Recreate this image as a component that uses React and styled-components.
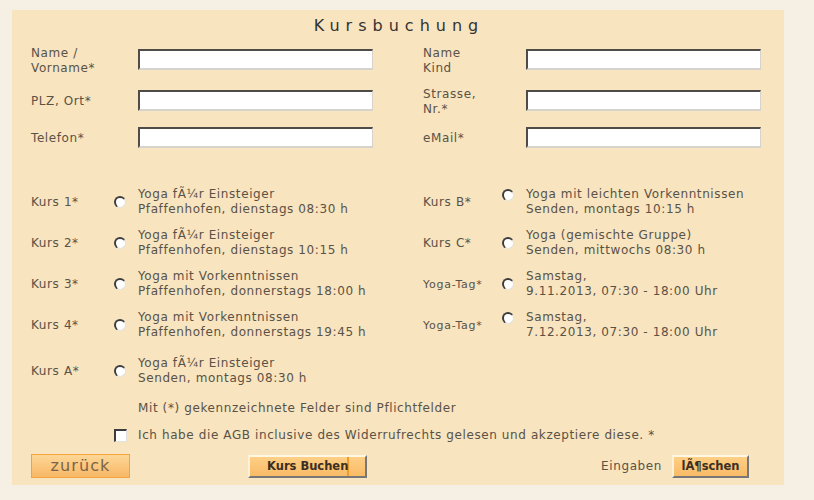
import styled, { createGlobalStyle } from "styled-components";

const GlobalStyle = createGlobalStyle`
  html, body {
    margin: 0;
    padding: 0;
    background: #f6efe4;
  }
  body {
    font-family: "DejaVu Sans", Verdana, sans-serif;
    font-size: 12px;
    letter-spacing: 0.6px;
    color: #5a5246;
  }
`;

const leftCourses = [
  { label: "Kurs 1*", lines: ["Yoga fÃ¼r Einsteiger", "Pfaffenhofen, dienstags 08:30 h"] },
  { label: "Kurs 2*", lines: ["Yoga fÃ¼r Einsteiger", "Pfaffenhofen, dienstags 10:15 h"] },
  { label: "Kurs 3*", lines: ["Yoga mit Vorkenntnissen", "Pfaffenhofen, donnerstags 18:00 h"] },
  { label: "Kurs 4*", lines: ["Yoga mit Vorkenntnissen", "Pfaffenhofen, donnerstags 19:45 h"] },
];

const rightCourses = [
  { label: "Kurs B*", lines: ["Yoga mit leichten Vorkenntnissen", "Senden, montags 10:15 h"], top: true },
  { label: "Kurs C*", lines: ["Yoga (gemischte Gruppe)", "Senden, mittwochs 08:30 h"] },
  { label: "Yoga-Tag*", small: true, lines: ["Samstag,", "9.11.2013, 07:30 - 18:00 Uhr"] },
  { label: "Yoga-Tag*", small: true, lines: ["Samstag,", "7.12.2013, 07:30 - 18:00 Uhr"], top: true },
];

export default function App() {
  return (
    <>
      <GlobalStyle />
      <Panel>
        <Title>Kursbuchung</Title>
        <FieldGrid>
          <Label>Name /<br />Vorname*</Label>
          <TextInput />
          <span />
          <Label>Name<br />Kind</Label>
          <TextInput />

          <Label>PLZ, Ort*</Label>
          <TextInput />
          <span />
          <Label>Strasse,<br />Nr.*</Label>
          <TextInput />

          <Label>Telefon*</Label>
          <TextInput />
          <span />
          <Label>eMail*</Label>
          <TextInput />
        </FieldGrid>

        <CourseGrid>
          {leftCourses.map((c, i) => (
            <CoursePair key={i}>
              <Course course={c} />
              <Course course={rightCourses[i]} right />
            </CoursePair>
          ))}
          <CoursePair $last>
            <Course course={{ label: "Kurs A*", lines: ["Yoga fÃ¼r Einsteiger", "Senden, montags 08:30 h"] }} />
          </CoursePair>
        </CourseGrid>

        <Note>Mit (*) gekennzeichnete Felder sind Pflichtfelder</Note>

        <AgbRow>
          <Check type="checkbox" />
          <span>Ich habe die AGB inclusive des Widerrufrechts gelesen und akzeptiere diese. *</span>
        </AgbRow>

        <ButtonRow>
          <BackButton>zurück</BackButton>
          <SubmitButton $divider>Kurs Buchen</SubmitButton>
          <ResetText>Eingaben</ResetText>
          <SubmitButton $width="77px">lÃ¶schen</SubmitButton>
        </ButtonRow>
      </Panel>
    </>
  );
}

function Course({ course, right }) {
  return (
    <CourseCell $right={right}>
      <CourseLabel $small={course.small}>{course.label}</CourseLabel>
      <Radio type="radio" name="kurs" $top={course.top} />
      <CourseText>
        {course.lines[0]}
        <br />
        {course.lines[1]}
      </CourseText>
    </CourseCell>
  );
}

const Panel = styled.div`
  width: 772px;
  margin: 10px 0 0 12px;
  box-sizing: border-box;
  padding: 0 23px 7px 19px;
  background: #f8e4bf;
`;

const Title = styled.div`
  text-align: center;
  font-size: 16px;
  letter-spacing: 6px;
  color: #333;
  padding: 6px 0 0 6px;
  height: 23px;
  line-height: 20px;
`;

const FieldGrid = styled.div`
  display: grid;
  grid-template-columns: 107px 235px 50px 103px 235px;
  grid-template-rows: 41px 41px 33px;
  align-items: center;
`;

const Label = styled.div`
  line-height: 15px;
  padding-top: 2px;
`;

const TextInput = styled.input`
  box-sizing: border-box;
  width: 235px;
  height: 21px;
  margin: 0;
  background: #fff;
  border-style: solid;
  border-width: 2px 1px 2px 2px;
  border-color: #4f4b47 #d6d3cd #d6d3cd #4f4b47;
`;

const CourseGrid = styled.div`
  margin-top: 33px;
  display: flex;
  flex-direction: column;
  gap: 11px;
`;

const CoursePair = styled.div`
  display: grid;
  grid-template-columns: 392px 338px;
  margin-top: ${(p) => (p.$last ? "5px" : "0")};
`;

const CourseCell = styled.div`
  display: grid;
  grid-template-columns: ${(p) => (p.$right ? "79px 24px" : "83px 24px")} auto;
  align-items: center;
  line-height: 15px;
`;

const CourseLabel = styled.div`
  font-size: ${(p) => (p.$small ? "11px" : "12px")};
  letter-spacing: ${(p) => (p.$small ? "0.75px" : "0.6px")};
`;

const Radio = styled.input`
  appearance: none;
  box-sizing: border-box;
  width: 12px;
  height: 12px;
  margin: 0;
  border-radius: 50%;
  background: #fff;
  border-style: solid;
  border-width: 2px 1px 1px 2px;
  border-color: #3c3c3c #e4e2de #e4e2de #3c3c3c;
  align-self: ${(p) => (p.$top ? "start" : "center")};
  margin-top: ${(p) => (p.$top ? "2px" : "0")};
`;

const CourseText = styled.div``;

const Note = styled.div`
  margin: 15px 0 0 107px;
  line-height: 15px;
`;

const AgbRow = styled.label`
  display: flex;
  align-items: center;
  margin: 12px 0 0 83px;
  line-height: 15px;
`;

const Check = styled.input`
  appearance: none;
  box-sizing: border-box;
  width: 13px;
  height: 13px;
  margin: 0 11px 0 0;
  background: #fff;
  border-style: solid;
  border-width: 2px 1px 1px 2px;
  border-color: #3c3c3c #e4e2de #e4e2de #3c3c3c;
`;

const ButtonRow = styled.div`
  display: flex;
  align-items: center;
  margin-top: 11px;
  padding-right: 12px;
`;

const BackButton = styled.button`
  width: 99px;
  height: 24px;
  padding: 0 0 1px;
  font-family: "DejaVu Sans", Verdana, sans-serif;
  font-size: 16px;
  letter-spacing: 1.1px;
  color: #7b6447;
  background: linear-gradient(#fdd797, #f8b766);
  border: 1px solid #f3a43a;
`;

const SubmitButton = styled.button`
  box-sizing: border-box;
  width: ${(p) => p.$width || "119px"};
  height: 23px;
  padding: 0;
  padding-left: ${(p) => (p.$divider ? "17px" : "0")};
  text-align: ${(p) => (p.$divider ? "left" : "center")};
  margin-left: ${(p) => (p.$divider ? "118px" : "10px")};
  font-family: "DejaVu Sans", Verdana, sans-serif;
  font-size: 11.5px;
  font-weight: bold;
  letter-spacing: 0;
  color: #3a2f22;
  background: ${(p) =>
    p.$divider
      ? "linear-gradient(to right, transparent 84.4%, #f09a2c 84.4%, #f09a2c 86.2%, transparent 86.2%), linear-gradient(#fdcf85, #f9bb66)"
      : "linear-gradient(#fdcf85, #f9bb66)"};
  border-style: solid;
  border-width: 2px;
  border-color: #fff6e4 #777 #777 #fff1d8;
`;

const ResetText = styled.span`
  margin-left: auto;
`;
